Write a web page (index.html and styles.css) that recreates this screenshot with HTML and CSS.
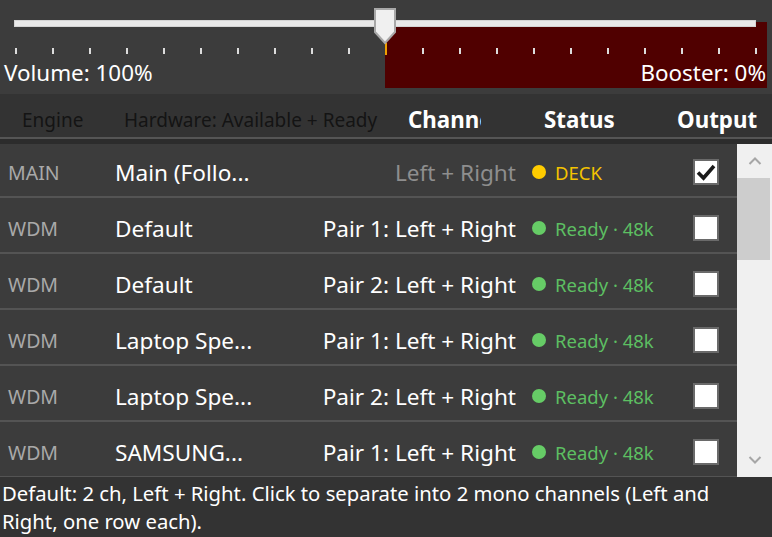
FILE: index.html
```html
<!DOCTYPE html>
<html>
<head>
<meta charset="utf-8">
<link rel="stylesheet" href="styles.css">
</head>
<body>
<div class="top">
  <div class="track">
    <div class="thumb">
      <svg width="22" height="37" viewBox="0 0 22 37"><path d="M1 1 H21 V24 L11 35 L1 24 Z" fill="#f0f0f0" stroke="#a8a8a8" stroke-width="2"/></svg>
    </div>
  </div>
  <div class="lower">
    <div class="ticks"><span class="cur"></span></div>
    <div class="labels"><span>Volume: 100%</span><span>Booster: 0%</span></div>
  </div>
</div>
<div class="header">
  <span class="h-engine">Engine</span>
  <span class="h-hw">Hardware: Available + Ready</span>
  <span class="h-ch">Channels</span>
  <span class="h-status">Status</span>
  <span class="h-out">Output</span>
</div>
<div class="gap"></div>
<div class="listwrap">
  <div class="list">
    <div class="row">
      <span class="eng">MAIN</span><span class="name">Main (Follo...</span><span class="ch dim">Left + Right</span>
      <span class="status deck"><i class="dot"></i>DECK</span>
      <span class="cb"><svg width="22" height="22" viewBox="0 0 22 22"><path d="M3 11.5 L8.5 17 L19 5" fill="none" stroke="#1a1a1a" stroke-width="3.6"/></svg></span>
    </div>
    <div class="row">
      <span class="eng">WDM</span><span class="name">Default</span><span class="ch">Pair 1: Left + Right</span>
      <span class="status ok"><i class="dot"></i>Ready · 48k</span><span class="cb"></span>
    </div>
    <div class="row">
      <span class="eng">WDM</span><span class="name">Default</span><span class="ch">Pair 2: Left + Right</span>
      <span class="status ok"><i class="dot"></i>Ready · 48k</span><span class="cb"></span>
    </div>
    <div class="row">
      <span class="eng">WDM</span><span class="name">Laptop Spe...</span><span class="ch">Pair 1: Left + Right</span>
      <span class="status ok"><i class="dot"></i>Ready · 48k</span><span class="cb"></span>
    </div>
    <div class="row">
      <span class="eng">WDM</span><span class="name">Laptop Spe...</span><span class="ch">Pair 2: Left + Right</span>
      <span class="status ok"><i class="dot"></i>Ready · 48k</span><span class="cb"></span>
    </div>
    <div class="row">
      <span class="eng">WDM</span><span class="name">SAMSUNG...</span><span class="ch">Pair 1: Left + Right</span>
      <span class="status ok"><i class="dot"></i>Ready · 48k</span><span class="cb"></span>
    </div>
  </div>
  <div class="scrollbar">
    <div class="sb-btn"><svg width="14" height="8" viewBox="0 0 14 8"><path d="M1.5 7 L7 1.5 L12.5 7" fill="none" stroke="#a6a6a6" stroke-width="2"/></svg></div>
    <div class="sb-thumb"></div>
    <div class="sb-space"></div>
    <div class="sb-btn"><svg width="14" height="8" viewBox="0 0 14 8"><path d="M1.5 1 L7 6.5 L12.5 1" fill="none" stroke="#a6a6a6" stroke-width="2"/></svg></div>
  </div>
</div>
<div class="footer">Default: 2 ch, Left + Right. Click to separate into 2 mono channels (Left and Right, one row each).</div>
</body>
</html>
```
FILE: styles.css
```css
* { box-sizing: border-box; }
html, body { margin: 0; padding: 0; }
body {
  width: 772px;
  height: 537px;
  overflow: hidden;
  background: #333333;
  font-family: "Noto Sans", "Open Sans", sans-serif;
  color: #ffffff;
}
.top {
  height: 94px;
  background: #3c3c3c;
  padding-top: 20px;
}
.track {
  position: relative;
  z-index: 2;
  margin: 0 16px 0 14px;
  height: 7px;
  background: #e9e9e9;
  border: 1px solid #d4d4d4;
}
.thumb {
  position: absolute;
  left: 359px;
  top: -13px;
  width: 22px;
  height: 37px;
}
.thumb svg { display: block; }
.lower {
  margin-top: -5px;
  height: 66px;
  padding-top: 26px;
  background: linear-gradient(to right, transparent 385px, #500000 385px, #500000 767px, transparent 767px);
  position: relative;
  z-index: 1;
}
.ticks {
  margin-left: 15px;
  width: 743px;
  height: 6px;
  background: repeating-linear-gradient(to right, #dcdcdc 0, #dcdcdc 2px, transparent 2px, transparent 37px);
  display: flex;
}
.ticks .cur {
  margin-left: 370px;
  margin-top: -5px;
  width: 2px;
  height: 12px;
  background: #f0a000;
}
.labels {
  display: flex;
  justify-content: space-between;
  padding: 0 6px 0 4px;
  font-size: 22.4px;
  line-height: 28px;
  margin-top: 5px;
}
.header {
  height: 45px;
  display: flex;
  align-items: center;
  border-bottom: 2px solid #555555;
  white-space: nowrap;
  background: #333333;
  padding-left: 22px;
  padding-top: 8px;
}
.header span { display: block; }
.h-engine, .h-hw { color: #141414; font-size: 19px; }
.h-engine { width: 102px; }
.h-hw { width: 284px; }
.h-ch, .h-status, .h-out { font-weight: 700; font-size: 22.3px; color: #fff; }
.h-ch { width: 73px; overflow: hidden; margin-right: 63px; }
.h-status { width: 133px; }
.gap { height: 5px; background: #2c2c2c; }
.listwrap {
  display: flex;
  height: 333px;
  background: #3c3c3c;
}
.list {
  width: 737px;
  overflow: hidden;
}
.row {
  display: grid;
  grid-template-columns: 107px 200px 201px 177px 26px;
  align-items: center;
  height: 56px;
  padding-left: 8px;
  padding-top: 6px;
  border-bottom: 2px solid #545454;
  background: #3c3c3c;
  white-space: nowrap;
}
.row:first-child { margin-top: -2px; }
.eng { color: #a9a9a9; font-size: 19.5px; }
.name { font-size: 22.6px; color: #fff; }
.ch { font-size: 22.6px; text-align: right; color: #fff; }
.ch.dim { color: #8e8e8e; }
.status {
  margin-left: 16px;
  font-size: 18.5px;
  display: flex;
  align-items: center;
}
.dot {
  display: inline-block;
  width: 14px;
  height: 14px;
  border-radius: 50%;
  margin-right: 9px;
}
.ok { color: #5dbf62; }
.ok .dot { background: #66cc66; }
.deck { color: #f4c300; }
.deck .dot { background: #ffcc00; }
.cb {
  width: 26px;
  height: 26px;
  background: #ffffff;
  border: 2px solid #6a6a6a;
  display: flex;
  align-items: center;
  justify-content: center;
}
.cb svg { display: block; }
.scrollbar {
  width: 35px;
  background: #f0f0f0;
  display: flex;
  flex-direction: column;
}
.sb-btn {
  height: 34px;
  display: flex;
  align-items: center;
  justify-content: center;
}
.sb-thumb {
  height: 82px;
  background: #cdcdcd;
  margin-right: 2px;
}
.sb-space { flex: 1; }
.footer {
  background: #333333;
  font-size: 20.3px;
  line-height: 28px;
  padding: 2px 40px 0 2px;
}
```
